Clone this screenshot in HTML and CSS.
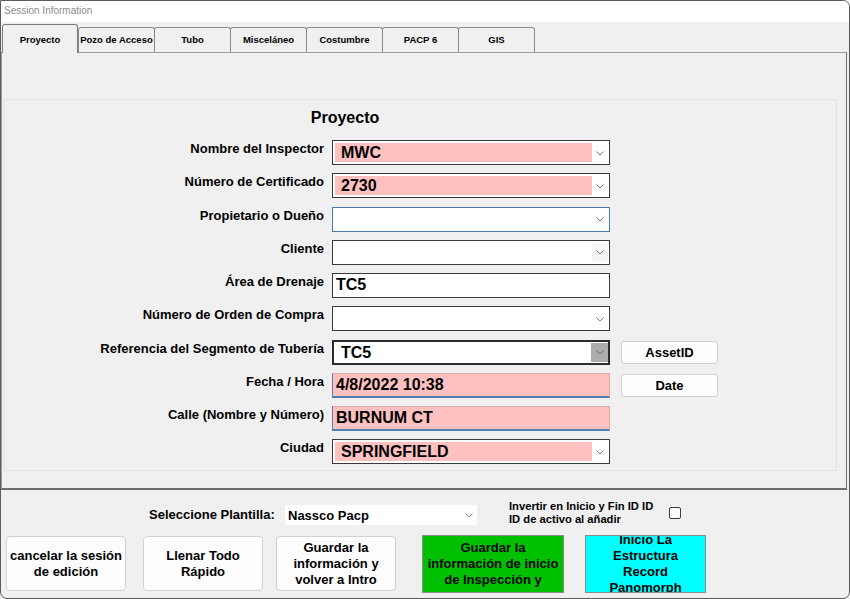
FILE: index.html
```html
<!DOCTYPE html>
<html lang="es">
<head>
    <meta charset="UTF-8">
    <title>Session Information</title>
    <link rel="stylesheet" href="styles.css">
</head>
<body>
    <div class="window">
        <div class="titlebar">Session Information</div>

        <div class="tab-area">
            <div class="tab-strip">
                <div class="tab tab-active">Proyecto</div>
                <div class="tab">Pozo de Acceso</div>
                <div class="tab">Tubo</div>
                <div class="tab">Misceláneo</div>
                <div class="tab">Costumbre</div>
                <div class="tab">PACP 6</div>
                <div class="tab">GIS</div>
            </div>

            <div class="tab-panel">
                <div class="group">
                    <h2 class="group-title">Proyecto</h2>
                    <div class="form-grid">
                        <label class="field-label">Nombre del Inspector</label>
                        <div class="combo combo-pink"><span class="combo-value">MWC</span><span class="combo-arrow"><svg width="8" height="5" viewBox="0 0 8 5"><path d="M0.5 0.5 L4 4 L7.5 0.5" fill="none" stroke="#7a7a7a" stroke-width="1"/></svg></span></div>
                        <div></div>

                        <label class="field-label">Número de Certificado</label>
                        <div class="combo combo-pink"><span class="combo-value">2730</span><span class="combo-arrow"><svg width="8" height="5" viewBox="0 0 8 5"><path d="M0.5 0.5 L4 4 L7.5 0.5" fill="none" stroke="#7a7a7a" stroke-width="1"/></svg></span></div>
                        <div></div>

                        <label class="field-label">Propietario o Dueño</label>
                        <div class="combo combo-focus"><span class="combo-value"></span><span class="combo-arrow"><svg width="8" height="5" viewBox="0 0 8 5"><path d="M0.5 0.5 L4 4 L7.5 0.5" fill="none" stroke="#7a7a7a" stroke-width="1"/></svg></span></div>
                        <div></div>

                        <label class="field-label">Cliente</label>
                        <div class="combo"><span class="combo-value"></span><span class="combo-arrow combo-arrow-soft"><svg width="8" height="5" viewBox="0 0 8 5"><path d="M0.5 0.5 L4 4 L7.5 0.5" fill="none" stroke="#7a7a7a" stroke-width="1"/></svg></span></div>
                        <div></div>

                        <label class="field-label">Área de Drenaje</label>
                        <div class="textbox">TC5</div>
                        <div></div>

                        <label class="field-label">Número de Orden de Compra</label>
                        <div class="combo"><span class="combo-value"></span><span class="combo-arrow"><svg width="8" height="5" viewBox="0 0 8 5"><path d="M0.5 0.5 L4 4 L7.5 0.5" fill="none" stroke="#7a7a7a" stroke-width="1"/></svg></span></div>
                        <div></div>

                        <label class="field-label">Referencia del Segmento de Tubería</label>
                        <div class="combo combo-active"><span class="combo-value">TC5</span><span class="combo-arrow combo-arrow-gray"><svg width="8" height="5" viewBox="0 0 8 5"><path d="M0.5 0.5 L4 4 L7.5 0.5" fill="none" stroke="#6a6a6a" stroke-width="1"/></svg></span></div>
                        <button class="side-button">AssetID</button>

                        <label class="field-label">Fecha / Hora</label>
                        <div class="textbox textbox-pink">4/8/2022 10:38</div>
                        <button class="side-button">Date</button>

                        <label class="field-label">Calle (Nombre y Número)</label>
                        <div class="textbox textbox-pink">BURNUM CT</div>
                        <div></div>

                        <label class="field-label">Ciudad</label>
                        <div class="combo combo-pink"><span class="combo-value">SPRINGFIELD</span><span class="combo-arrow"><svg width="8" height="5" viewBox="0 0 8 5"><path d="M0.5 0.5 L4 4 L7.5 0.5" fill="none" stroke="#7a7a7a" stroke-width="1"/></svg></span></div>
                        <div></div>
                    </div>
                </div>
            </div>
        </div>

        <div class="bottom">
            <div class="template-row">
                <span class="template-label">Seleccione Plantilla:</span>
                <div class="template-select">
                    <span>Nassco Pacp</span>
                    <svg width="8" height="5" viewBox="0 0 8 5"><path d="M0.5 0.5 L4 4 L7.5 0.5" fill="none" stroke="#8a8a8a" stroke-width="1"/></svg>
                </div>
                <span class="invert-label">Invertir en Inicio y Fin ID ID<br>ID de activo al añadir</span>
                <span class="checkbox"></span>
            </div>

            <div class="button-row">
                <div class="big-button btn-cancel"><span>cancelar la sesión de edición</span></div>
                <div class="big-button btn-fill"><span>Llenar Todo Rápido</span></div>
                <div class="big-button btn-save"><span>Guardar la información y volver a Intro</span></div>
                <div class="big-button btn-start"><span>Guardar la información de inicio de Inspección y</span></div>
                <div class="big-button btn-record"><span>Inicio La Estructura Record Panomorph</span></div>
            </div>
        </div>
    </div>
</body>
</html>
```

FILE: styles.css
```css
* {
    box-sizing: border-box;
}

body {
    margin: 0;
    font-family: "Liberation Sans", Arial, sans-serif;
    background-color: #f0f0f0;
}

.window {
    width: 850px;
    height: 599px;
    border: 1px solid #5c5c5c;
    border-radius: 0 7px 7px 7px;
    background-color: #f0f0f0;
    overflow: hidden;
    display: flex;
    flex-direction: column;
}

.titlebar {
    height: 21px;
    flex: none;
    background-color: #ffffff;
    color: #8c8c8c;
    font-family: "Liberation Sans", Arial, sans-serif;
    font-size: 10px;
    line-height: 20px;
    padding-left: 3px;
}

.tab-area {
    flex: none;
}

.tab-strip {
    display: flex;
    align-items: flex-end;
    height: 30px;
    padding-left: 1px;
}

.tab {
    width: 77px;
    height: 25px;
    margin-right: -1px;
    border: 1px solid #8a8a8a;
    border-bottom: none;
    border-radius: 3px 3px 0 0;
    background-color: #f0f0f0;
    font-size: 9.5px;
    font-weight: bold;
    text-align: center;
    line-height: 24px;
    color: #000;
    white-space: nowrap;
    overflow: hidden;
}

.tab-active {
    width: 76px;
    height: 29px;
    margin-bottom: -1px;
    position: relative;
    z-index: 1;
    line-height: 30px;
    border-color: #7a7a7a;
}

.tab-active + .tab {
    margin-left: 1px;
}

.tab-panel {
    height: 438px;
    margin-right: 2px;
    border: 1px solid #9c9c9c;
    border-right-color: #6a6a6a;
    border-bottom: 2px solid #6e6e6e;
    padding: 46px 9px 0 2px;
}

.group {
    height: 372px;
    border: 1px solid #e2e2e2;
}

.group-title {
    margin: 9px 0 0 0;
    font-size: 16px;
    line-height: 18px;
    text-align: center;
    height: 18px;
    width: 680px;
}

.form-grid {
    display: grid;
    grid-template-columns: 327px 278px 108px;
    grid-auto-rows: 25px;
    row-gap: 8.25px;
    margin-top: 13px;
}

.field-label {
    font-size: 13px;
    font-weight: bold;
    text-align: right;
    padding-right: 8px;
    padding-top: 1px;
    line-height: 15px;
    white-space: nowrap;
}

.combo {
    display: flex;
    height: 25px;
    border: 1px solid #3a3a3a;
    background-color: #ffffff;
    padding: 2px 1px 2px 2px;
}

.combo-value {
    flex: 1;
    font-size: 16px;
    font-weight: bold;
    line-height: 20px;
    padding-left: 6px;
}

.combo-pink .combo-value {
    background-color: #ffc0c0;
}

.combo-focus {
    border-color: #4a78a8;
}

.combo-active {
    border: 2px solid #2c2c2c;
    padding: 1px 0 1px 1px;
}

.combo-arrow {
    width: 16px;
    display: flex;
    align-items: center;
    justify-content: center;
    padding-top: 1px;
}

.combo-arrow-soft {
    background-color: #f6f6f6;
}

.combo-arrow-gray {
    width: 17px;
    background-color: #acacac;
}

.textbox {
    height: 25px;
    border: 1px solid #3a3a3a;
    background-color: #ffffff;
    font-size: 16px;
    font-weight: bold;
    line-height: 22px;
    padding-left: 3px;
}

.textbox-pink {
    background-color: #ffc0c0;
    border-style: solid;
    border-width: 1px 1px 2px 1px;
    border-color: #e2a6a6 #e2a6a6 #4f7fb0 #4f7fb0;
    line-height: 21px;
}

.side-button {
    width: 97px;
    height: 23px;
    margin: 1px 0 0 11px;
    border: 1px solid #d2d2d2;
    border-radius: 3px;
    background-color: #fdfdfd;
    font-family: "Liberation Sans", Arial, sans-serif;
    font-size: 13px;
    font-weight: bold;
    color: #000;
    padding: 0;
}

.bottom {
    flex: 1;
    padding-top: 9px;
}

.template-row {
    display: flex;
    align-items: center;
    height: 28px;
    padding-left: 148px;
}

.template-label {
    font-size: 13px;
    font-weight: bold;
    width: 126px;
    white-space: nowrap;
    padding-top: 2px;
}

.template-select {
    display: flex;
    align-items: center;
    justify-content: space-between;
    width: 192px;
    height: 20px;
    margin-left: 10px;
    margin-top: 4px;
    padding: 0 4px 0 3px;
    background-color: #ffffff;
    font-size: 13px;
    font-weight: bold;
}

.invert-label {
    margin-left: 32px;
    font-size: 11.2px;
    font-weight: bold;
    line-height: 13px;
    width: 150px;
    white-space: nowrap;
}

.checkbox {
    width: 12px;
    height: 12px;
    margin-left: 10px;
    border: 1px solid #3c3c3c;
    border-radius: 2px;
    background-color: #ffffff;
}

.button-row {
    display: flex;
    align-items: flex-start;
    padding-left: 5px;
    margin-top: 8px;
}

.big-button {
    display: flex;
    align-items: center;
    justify-content: center;
    width: 120px;
    height: 55px;
    margin-top: 1px;
    border: 1px solid #d2d2d2;
    border-radius: 4px;
    background-color: #fdfdfd;
    font-size: 13px;
    font-weight: bold;
    line-height: 16px;
    color: #000;
    text-align: center;
    padding: 0 2px;
    overflow: hidden;
}

.btn-fill {
    margin-left: 17px;
}

.btn-save {
    margin-left: 13px;
}

.btn-start {
    width: 142px;
    height: 58px;
    margin-top: 0;
    margin-left: 26px;
    border: 1px solid #8c8c8c;
    border-radius: 0;
    background-color: #00c000;
}

.btn-record {
    width: 121px;
    height: 58px;
    margin-top: 0;
    margin-left: 21px;
    border: 1px solid #8c8c8c;
    border-radius: 0;
    background-color: #00ffff;
    padding: 0 12px;
}
```
